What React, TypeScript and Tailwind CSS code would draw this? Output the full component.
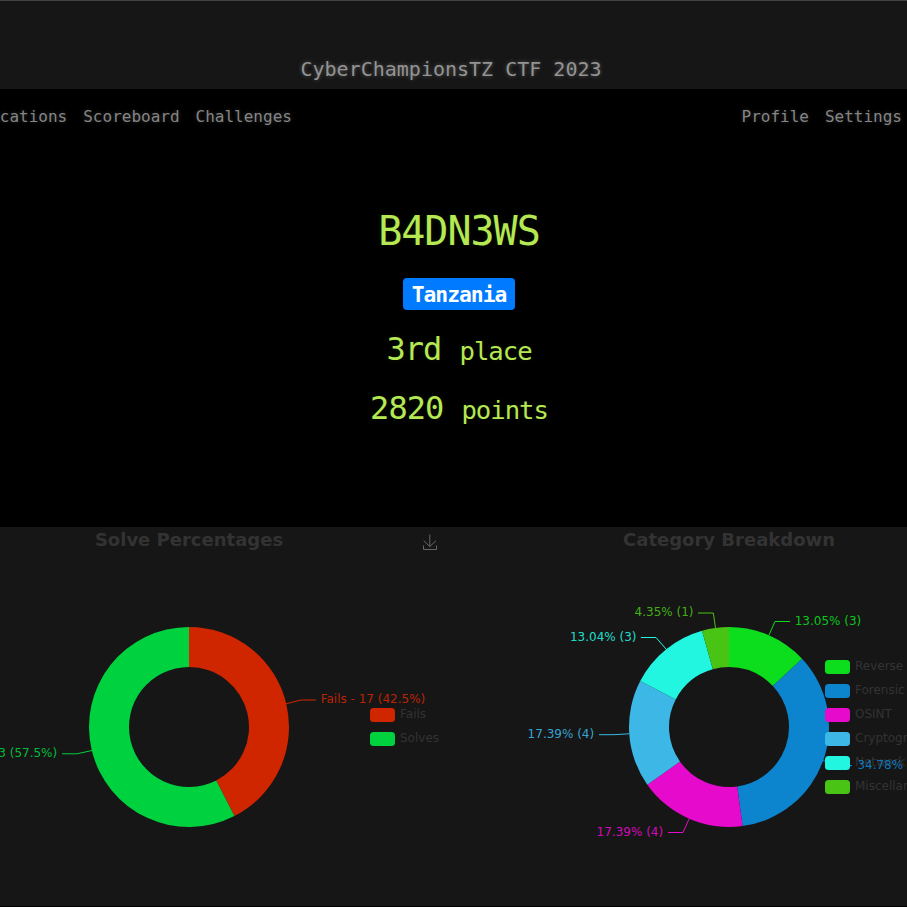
import React from 'react';

type Slice = { name: string; value: number; color: string };
type Callout = { text: string; x: number; y: number; anchor: 'start' | 'end'; line: string; color: string };

const R = 100;
const r = 60;

const solves: Slice[] = [
  { name: 'Fails', value: 17, color: '#cf2600' },
  { name: 'Solves', value: 23, color: '#00d13f' },
];

const categories: Slice[] = [
  { name: 'Reverse', value: 3, color: '#0cdd1c' },
  { name: 'Forensic', value: 8, color: '#0c84ce' },
  { name: 'OSINT', value: 4, color: '#e60acd' },
  { name: 'Cryptography', value: 4, color: '#3cb7e6' },
  { name: 'Network', value: 3, color: '#22f5e0' },
  { name: 'Miscellaneous', value: 1, color: '#49c314' },
];

const solveCallouts: Callout[] = [
  { text: 'Fails - 17 (42.5%)', x: 320.7, y: 176, anchor: 'start', line: 'M286 176.8 L301 173 H316', color: '#cf2600' },
  { text: 'Solves - 23 (57.5%)', x: 57.2, y: 230, anchor: 'end', line: 'M92 223.5 L77 226.8 H62', color: '#00d13f' },
];

const categoryCallouts: Callout[] = [
  { text: '13.05% (3)', x: 340.7, y: 98, anchor: 'start', line: 'M315 108 L321 94.5 H336', color: '#0cdd1c' },
  { text: '34.78% (8)', x: 403.4, y: 242, anchor: 'start', line: 'M369 233.5 L383 238.5 H398', color: '#0c84ce' },
  { text: '17.39% (4)', x: 209.2, y: 309, anchor: 'end', line: 'M235 292 L229 305.5 H214', color: '#e60acd' },
  { text: '17.39% (4)', x: 140.2, y: 211, anchor: 'end', line: 'M175 206.8 L160 207.7 H145', color: '#3cb7e6' },
  { text: '13.04% (3)', x: 182.5, y: 114, anchor: 'end', line: 'M212 122 L202 110.5 H187', color: '#22f5e0' },
  { text: '4.35% (1)', x: 239.5, y: 89, anchor: 'end', line: 'M261.5 101 L259.3 86 H244', color: '#49c314' },
];

function arcs(data: Slice[], cx: number, cy: number) {
  const total = data.reduce((sum, s) => sum + s.value, 0);
  let angle = -Math.PI / 2;
  return data.map(s => {
    const start = angle;
    angle += (s.value / total) * Math.PI * 2;
    const large = angle - start > Math.PI ? 1 : 0;
    const p = (radius: number, a: number) => `${cx + radius * Math.cos(a)} ${cy + radius * Math.sin(a)}`;
    return `M${p(R, start)} A${R} ${R} 0 ${large} 1 ${p(R, angle)} L${p(r, angle)} A${r} ${r} 0 ${large} 0 ${p(r, start)} Z`;
  });
}

type DonutProps = {
  title: string;
  cx: number;
  data: Slice[];
  callouts: Callout[];
  legendX: number;
  legendY: number;
  children?: React.ReactNode;
};

function Donut({ title, cx, data, callouts, legendX, legendY, children }: DonutProps) {
  const paths = arcs(data, cx, 200);
  return (
    <svg width="454" height="379" className="block shrink-0 font-['DejaVu_Sans',sans-serif] text-[12px]">
      <text x={cx} y="19" textAnchor="middle" fill="#333" className="text-[18px] font-bold">{title}</text>
      {data.map((s, i) => <path key={s.name} d={paths[i]} fill={s.color} />)}
      {callouts.map((c, i) => <path key={i} d={c.line} stroke={c.color} fill="none" />)}
      {data.map((s, i) => (
        <g key={s.name}>
          <rect x={legendX} y={legendY + i * 24} width="25" height="14" rx="3.5" fill={s.color} />
          <text x={legendX + 30} y={legendY + 10 + i * 24} fill="#333">{s.name}</text>
        </g>
      ))}
      {callouts.map((c, i) => (
        <text key={i} x={c.x} y={c.y} textAnchor={c.anchor} fill={c.color} fillOpacity="0.9">{c.text}</text>
      ))}
      {children}
    </svg>
  );
}

export default function App() {
  return (
    <div className="h-[907px] w-[907px] overflow-hidden bg-black font-['DejaVu_Sans_Mono',monospace]">
      <header className="flex h-[89px] items-end justify-center border-t border-[#414345] bg-[#161616] pr-[5px] pb-[5px]">
        <h1 className="text-[20px] leading-[30px] text-[#939393] [text-shadow:0_0_4px_#555]">CyberChampionsTZ CTF 2023</h1>
      </header>

      <nav className="flex h-[55px] items-center justify-between pr-[5px] text-[16px] text-[#858585] [text-shadow:0_0_4px_#333]">
        <div className="-ml-[58px] flex gap-4">
          <a>Notifications</a>
          <a>Scoreboard</a>
          <a>Challenges</a>
        </div>
        <div className="flex gap-4">
          <a>Profile</a>
          <a>Settings</a>
        </div>
      </nav>

      <main className="flex h-[383px] flex-col items-center pt-[63px] pl-[11px] tracking-[-1px] text-[#b5e853] [text-shadow:0_1px_1px_rgba(0,0,0,0.1),0_0_5px_rgba(181,232,83,0.1)]">
        <h1 className="text-[40px] leading-[48px]">B4DN3WS</h1>
        <span className="mt-[23px] flex h-[32px] w-[112px] items-center justify-center rounded bg-[#007bff] pt-[2px] text-[21.33px] leading-[30px] font-bold text-white [text-shadow:none]">Tanzania</span>
        <h2 className="mt-[20px] text-[32px] leading-[38px]">3rd <small className="text-[25.6px]">place</small></h2>
        <h2 className="mt-[19px] text-[32px] leading-[38px]">2820 <small className="text-[25.6px]">points</small></h2>
      </main>

      <section className="flex h-[379px] bg-[#161616]">
        <Donut title="Solve Percentages" cx={189} data={solves} callouts={solveCallouts} legendX={370} legendY={181}>
          {/* save as image */}
          <path d="M423.5 18.5 V22.5 H436.5 V18.5 M429.8 7.5 V19.5 M423.7 13.7 L429.8 19.5 L436 13.7" stroke="#666" fill="none" />
        </Donut>
        <Donut title="Category Breakdown" cx={275} data={categories} callouts={categoryCallouts} legendX={371} legendY={133} />
      </section>
    </div>
  );
}
